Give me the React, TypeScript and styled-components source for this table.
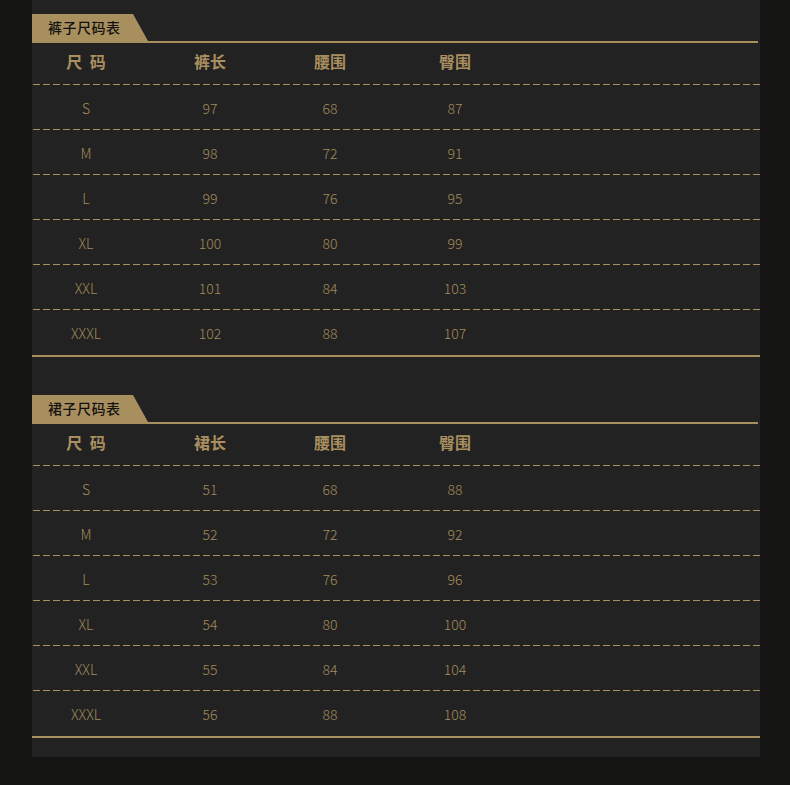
import React from "react";
import styled, { createGlobalStyle } from "styled-components";

const GlobalStyle = createGlobalStyle`
  html, body {
    margin: 0;
    padding: 0;
    background: #141413;
  }
  body {
    font-family: "Noto Sans CJK SC", "Noto Sans", sans-serif;
  }
`;

const gold = "#a88f5e";

const Page = styled.div`
  width: 790px;
  height: 785px;
  background: #141413;
`;

const Panel = styled.div`
  margin-left: 32px;
  width: 728px;
  height: 757px;
  background: #222222;
  padding-top: 14px;
  box-sizing: border-box;
  display: flex;
  flex-direction: column;
  gap: 38px;
`;

const Section = styled.section`
  display: flex;
  flex-direction: column;
`;

const TabRow = styled.div`
  height: 27px;
  border-bottom: 2px solid ${gold};
  margin-right: 2px;
  display: flex;
`;

const Tab = styled.div`
  width: 116px;
  height: 27px;
  background: ${gold};
  clip-path: polygon(0 0, 101px 0, 116px 100%, 0 100%);
  color: #141210;
  font-size: 14px;
  font-weight: 500;
  line-height: 27px;
  padding-left: 16px;
  box-sizing: border-box;
  letter-spacing: 0.5px;
`;

const Table = styled.div`
  display: flex;
  flex-direction: column;
  border-bottom: 2px solid ${gold};
`;

const Row = styled.div<{ $head?: boolean; $last?: boolean }>`
  display: grid;
  grid-template-columns: 108px 140px 100px 150px;
  height: ${(p) => (p.$head ? "42px" : "45px")};
  align-items: center;
  position: relative;
  color: ${(p) => (p.$head ? "#a98f5f" : "#a38a5b")};
  font-size: ${(p) => (p.$head ? "16px" : "14px")};
  font-weight: ${(p) => (p.$head ? 700 : 300)};
  padding: ${(p) => (p.$head ? "0 0 6px" : "1px 0 0")};
  box-sizing: border-box;

  &::after {
    content: "";
    display: ${(p) => (p.$last ? "none" : "block")};
    position: absolute;
    left: 1px;
    right: 0;
    bottom: 0;
    height: 1px;
    background: repeating-linear-gradient(
      to right,
      ${gold} 0 7px,
      transparent 7px 10px
    );
  }
`;

const Cell = styled.div<{ $spread?: boolean }>`
  text-align: center;
  letter-spacing: ${(p) => (p.$spread ? "2px" : "0")};
  padding-left: ${(p) => (p.$spread ? "2px" : "0")};
`;

type SizeTable = {
  title: string;
  lengthLabel: string;
  rows: [string, number, number, number][];
};

const tables: SizeTable[] = [
  {
    title: "裤子尺码表",
    lengthLabel: "裤长",
    rows: [
      ["S", 97, 68, 87],
      ["M", 98, 72, 91],
      ["L", 99, 76, 95],
      ["XL", 100, 80, 99],
      ["XXL", 101, 84, 103],
      ["XXXL", 102, 88, 107],
    ],
  },
  {
    title: "裙子尺码表",
    lengthLabel: "裙长",
    rows: [
      ["S", 51, 68, 88],
      ["M", 52, 72, 92],
      ["L", 53, 76, 96],
      ["XL", 54, 80, 100],
      ["XXL", 55, 84, 104],
      ["XXXL", 56, 88, 108],
    ],
  },
];

const App = () => {
  return (
    <Page>
      <GlobalStyle />
      <Panel>
        {tables.map((t) => (
          <Section key={t.title}>
            <TabRow>
              <Tab>{t.title}</Tab>
            </TabRow>
            <Table>
              <Row $head>
                <Cell $spread>尺 码</Cell>
                <Cell>{t.lengthLabel}</Cell>
                <Cell>腰围</Cell>
                <Cell>臀围</Cell>
              </Row>
              {t.rows.map((r, i) => (
                <Row key={r[0]} $last={i === t.rows.length - 1}>
                  {r.map((v, j) => (
                    <Cell key={j}>{v}</Cell>
                  ))}
                </Row>
              ))}
            </Table>
          </Section>
        ))}
      </Panel>
    </Page>
  );
};

export default App;
